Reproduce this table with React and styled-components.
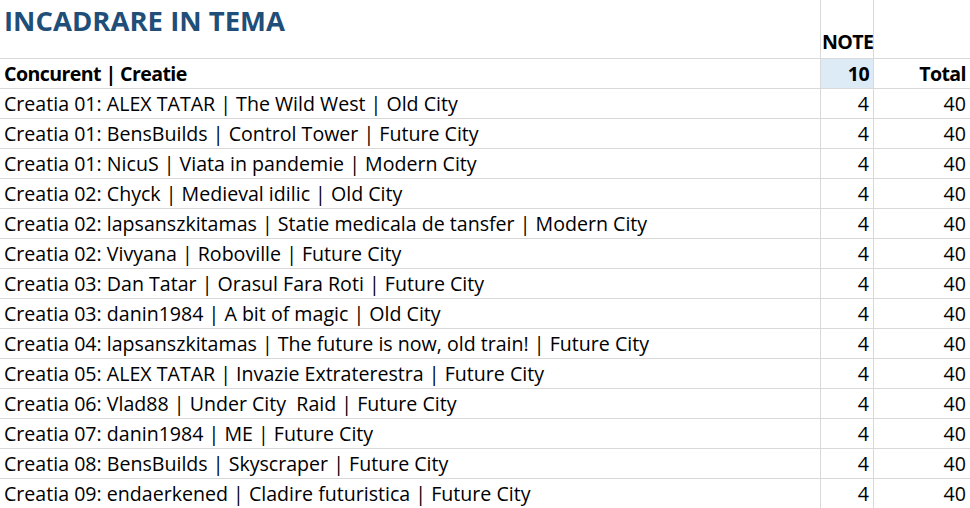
import React from "react";
import styled, { createGlobalStyle } from "styled-components";

const Global = createGlobalStyle`
  html, body { margin: 0; padding: 0; background: #fff; }
  body { font-family: "Open Sans", "Noto Sans", sans-serif; color: #000; overflow: hidden; }
`;

const Sheet = styled.div`
  width: 970px;
  height: 508px;
  overflow: hidden;
  display: flex;
  flex-direction: column;
`;

const Cols = `
  display: grid;
  grid-template-columns: 821px 53px 96px;
`;

const Head = styled.div`
  ${Cols}
  height: 58px;
  flex: 0 0 58px;
`;

const Row = styled.div`
  ${Cols}
  height: 30px;
  border-top: 1px solid #d9d9d9;
  box-sizing: border-box;
  flex: 0 0 30px;
`;

const Cell = styled.div`
  box-sizing: border-box;
  border-right: ${(p) => (p.$last ? "none" : "1px solid #d9d9d9")};
  background: ${(p) => p.$fill || "transparent"};
  display: flex;
  align-items: flex-end;
  justify-content: ${(p) => (p.$num ? "flex-end" : "flex-start")};
  padding: ${(p) => (p.$num ? `0 ${p.$last ? 4 : 4}px 2px 0` : "0 0 2px 4px")};
  font-size: 19.6px;
  line-height: 24px;
  font-weight: ${(p) => (p.$bold ? 700 : 400)};
  letter-spacing: ${(p) => (p.$bold ? "-0.6px" : "0")};
  white-space: pre;
`;

const TitleCell = styled(Cell)`
  align-items: flex-start;
  padding: 5px 0 0 4px;
`;

const Title = styled.h1`
  margin: 0;
  font-size: 27.5px;
  line-height: 32px;
  font-weight: 700;
  color: #1f4e79;
`;

const NoteCell = styled(Cell)`
  padding: 0 0 4px 1px;
  overflow: visible;
`;

const data = [
  "Creatia 01: ALEX TATAR | The Wild West | Old City",
  "Creatia 01: BensBuilds | Control Tower | Future City",
  "Creatia 01: NicuS | Viata in pandemie | Modern City",
  "Creatia 02: Chyck | Medieval idilic | Old City",
  "Creatia 02: lapsanszkitamas | Statie medicala de tansfer | Modern City",
  "Creatia 02: Vivyana | Roboville | Future City",
  "Creatia 03: Dan Tatar | Orasul Fara Roti | Future City",
  "Creatia 03: danin1984 | A bit of magic | Old City",
  "Creatia 04: lapsanszkitamas | The future is now, old train! | Future City",
  "Creatia 05: ALEX TATAR | Invazie Extraterestra | Future City",
  "Creatia 06: Vlad88 | Under City  Raid | Future City",
  "Creatia 07: danin1984 | ME | Future City",
  "Creatia 08: BensBuilds | Skyscraper | Future City",
  "Creatia 09: endaerkened | Cladire futuristica | Future City",
];

export default function App() {
  return (
    <Sheet>
      <Global />
      <Head>
        <TitleCell>
          <Title>INCADRARE IN TEMA</Title>
        </TitleCell>
        <NoteCell $bold>NOTE</NoteCell>
        <Cell $last />
      </Head>
      <Row>
        <Cell $bold>Concurent | Creatie</Cell>
        <Cell $bold $num $fill="#ddebf7">10</Cell>
        <Cell $bold $num $last>Total</Cell>
      </Row>
      {data.map((t, i) => (
        <Row key={i}>
          <Cell>{t}</Cell>
          <Cell $num>4</Cell>
          <Cell $num $last>40</Cell>
        </Row>
      ))}
    </Sheet>
  );
}
